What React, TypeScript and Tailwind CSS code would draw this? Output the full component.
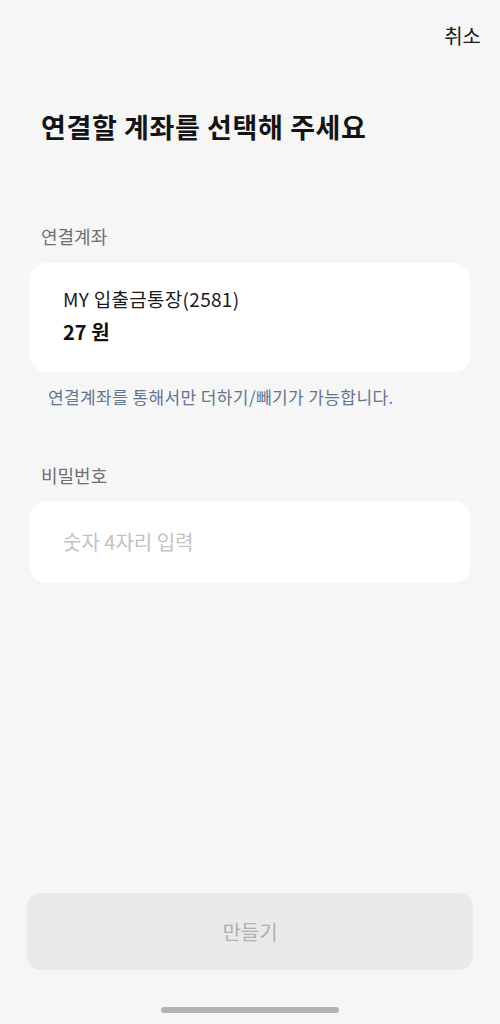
import React from "react";

export default function App() {
  return (
    <div
      className="h-[1024px] w-full bg-[#f6f6f6] flex flex-col text-[#111111]"
      style={{ fontFamily: '"Noto Sans CJK KR", "Noto Sans", sans-serif' }}
    >
      <div className="flex justify-end pt-[22px] pr-[19px]">
        <span className="text-[20px] leading-[28px] text-[#1a1a1a]">취소</span>
      </div>

      <h1 className="mt-[59px] px-[41px] text-[27px] leading-[35px] font-bold tracking-[0.6px] text-[#141414]">
        연결할 계좌를 선택해 주세요
      </h1>

      <div className="mt-[80px] px-[41px] text-[18px] leading-[24px] text-[#6f6f6f]">연결계좌</div>

      <div className="mt-[15px] mx-[30px] rounded-[16px] bg-white px-[33px] pt-[23px] pb-[27px] flex flex-col gap-[7px]">
        <div className="text-[19px] leading-[26px] tracking-[0.3px] text-[#1a1a1a]">MY 입출금통장(2581)</div>
        <div className="text-[20px] leading-[26px] font-bold text-[#111111]">27 원</div>
      </div>

      <div className="mt-[14px] px-[48px] text-[17px] leading-[22px] tracking-[0.4px] text-[#62758f]">
        연결계좌를 통해서만 더하기/빼기가 가능합니다.
      </div>

      <div className="mt-[55px] px-[41px] text-[18px] leading-[24px] text-[#6f6f6f]">비밀번호</div>

      <div className="mt-[14px] mx-[30px] h-[82px] rounded-[16px] bg-white px-[33px] flex items-center">
        <span className="text-[20px] leading-[26px] text-[#c2c2c2]">숫자 4자리 입력</span>
      </div>

      <div className="flex-1" />

      <div className="mx-[27px] h-[77px] rounded-[14px] bg-[#e9e9e9] flex items-center justify-center">
        <span className="text-[20px] leading-[28px] text-[#b0b0b0]">만들기</span>
      </div>

      <div className="mt-[37px] mb-[11px] flex justify-center">
        <div className="h-[6px] w-[178px] rounded-full bg-[#b3b3b3]" />
      </div>
    </div>
  );
}
